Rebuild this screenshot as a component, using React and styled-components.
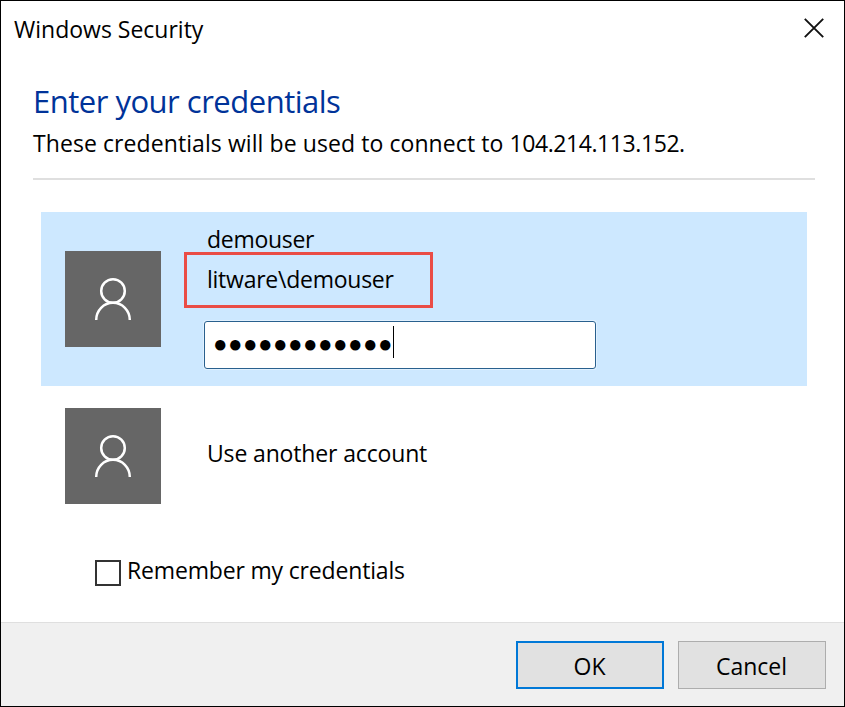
import React from 'react';
import styled, { createGlobalStyle } from 'styled-components';

const GlobalStyle = createGlobalStyle`
  * { box-sizing: border-box; }
  body { margin: 0; background: #fff; }
`;

const Dialog = styled.main`
  display: flex;
  flex-direction: column;
  width: 845px;
  height: 707px;
  border: 1px solid #000;
  background: #fff;
  color: #000;
  font: 23px/32px "Open Sans", "Noto Sans", sans-serif;
  white-space: nowrap;
`;

const Text = styled.span`
  letter-spacing: ${({ $spacing = 0 }) => $spacing}px;
`;

const TitleBar = styled.header`
  display: flex;
  justify-content: space-between;
  height: 79px;
  padding: 12px 19px 0 13px;
`;

const CloseButton = styled.button`
  width: 22px;
  height: 22px;
  margin-top: 4px;
  padding: 0;
  border: 0;
  background: none;

  svg { display: block; }
`;

const Intro = styled.section`
  height: 100px;
  margin: 0 29px 0 32px;
  border-bottom: 2px solid #dfdfdf;
`;

const Heading = styled.h1`
  height: 47px;
  margin: 0;
  color: #003399;
  font-size: 31px;
  font-weight: 400;
  line-height: 42px;
  letter-spacing: -0.5px;
`;

const Subtitle = styled.p`
  margin: 0;
`;

const AccountRow = styled.section`
  display: flex;
  align-items: ${({ $selected }) => ($selected ? 'flex-start' : 'center')};
  height: ${({ $selected }) => ($selected ? '174px' : '96px')};
  margin: ${({ $selected }) => ($selected ? '32px 37px 0 40px' : '22px 37px 0 40px')};
  padding-left: 24px;
  background: ${({ $selected }) => ($selected ? '#cde8ff' : 'transparent')};
`;

const Avatar = styled.div`
  flex: none;
  width: 96px;
  height: 96px;
  margin-top: ${({ $offset = 0 }) => $offset}px;
  background: #666;

  svg { display: block; }
`;

const Details = styled.div`
  display: flex;
  flex-direction: column;
  align-items: flex-start;
  padding: 11px 0 0 23px;
`;

const UserName = styled.div`
  height: 29px;
  padding-left: 23px;
  letter-spacing: -0.3px;
`;

const Highlight = styled.div`
  width: 249px;
  height: 56px;
  padding: 8px 0 0 20px;
  border: 3px solid #ea4c46;
  letter-spacing: -0.25px;
`;

const PasswordField = styled.div`
  display: flex;
  align-items: flex-start;
  width: 392px;
  height: 48px;
  margin: 13px 0 0 20px;
  padding: 4px 0 0 8px;
  border: 1px solid #29608e;
  border-radius: 3px;
  background: #fff;
  box-shadow: 0 0 0 1px #e1f1ff;
`;

const Dots = styled.span`
  width: 180px;
  padding-top: 2px;
  font-family: "Liberation Sans", sans-serif;
  font-size: 24px;
  letter-spacing: 0.5px;
`;

const Caret = styled.span`
  width: 1px;
  height: 32px;
  background: #000;
`;

const OtherAccount = styled.div`
  padding-left: 46px;
  letter-spacing: -0.15px;
  margin-top: -6px;
`;

const Remember = styled.label`
  display: flex;
  align-items: flex-start;
  height: 68px;
  margin: 50px 0 0 94px;
  letter-spacing: -0.17px;
`;

const Checkbox = styled.span`
  width: 26px;
  height: 26px;
  margin: 6px 6px 0 0;
  border: 2px solid #333;
  background: #fff;
`;

const Footer = styled.footer`
  display: flex;
  flex: 1;
  justify-content: flex-end;
  gap: 14px;
  padding: 18px 18px 0 0;
  border-top: 1px solid #dfdfdf;
  background: #f0f0f0;
`;

const Button = styled.button`
  width: 148px;
  height: 48px;
  padding: 2px 1px 0 0;
  border: ${({ $primary }) => ($primary ? '2px solid #0078d7' : '1px solid #adadad')};
  background: #e1e1e1;
  color: #000;
  font: inherit;
`;

function PersonIcon() {
  return (
    <svg width="96" height="96" viewBox="0 0 96 96" fill="none" stroke="#fff" strokeWidth="2.5">
      <circle cx="48" cy="40" r="11.8" />
      <path d="M31.2 69A16.8 17.2 0 0 1 64.8 69" />
    </svg>
  );
}

export default function App() {
  return (
    <>
      <GlobalStyle />
      <Dialog>
        <TitleBar>
          <Text>Windows Security</Text>
          <CloseButton aria-label="Close">
            <svg width="22" height="22" viewBox="0 0 22 22" stroke="#111" strokeWidth="1.9">
              <path d="M1.8 1.8L20.2 20.2M20.2 1.8L1.8 20.2" />
            </svg>
          </CloseButton>
        </TitleBar>
        <Intro>
          <Heading>Enter your credentials</Heading>
          <Subtitle>
            <Text $spacing={0.08}>These credentials will be used to connect to </Text>
            <Text $spacing={-0.42}>104.214.113.152.</Text>
          </Subtitle>
        </Intro>
        <AccountRow $selected>
          <Avatar $offset={39}><PersonIcon /></Avatar>
          <Details>
            <UserName>demouser</UserName>
            <Highlight>litware\demouser</Highlight>
            <PasswordField>
              <Dots>{'●'.repeat(12)}</Dots>
              <Caret />
            </PasswordField>
          </Details>
        </AccountRow>
        <AccountRow>
          <Avatar><PersonIcon /></Avatar>
          <OtherAccount>Use another account</OtherAccount>
        </AccountRow>
        <Remember>
          <Checkbox />
          Remember my credentials
        </Remember>
        <Footer>
          <Button $primary>OK</Button>
          <Button>Cancel</Button>
        </Footer>
      </Dialog>
    </>
  );
}
